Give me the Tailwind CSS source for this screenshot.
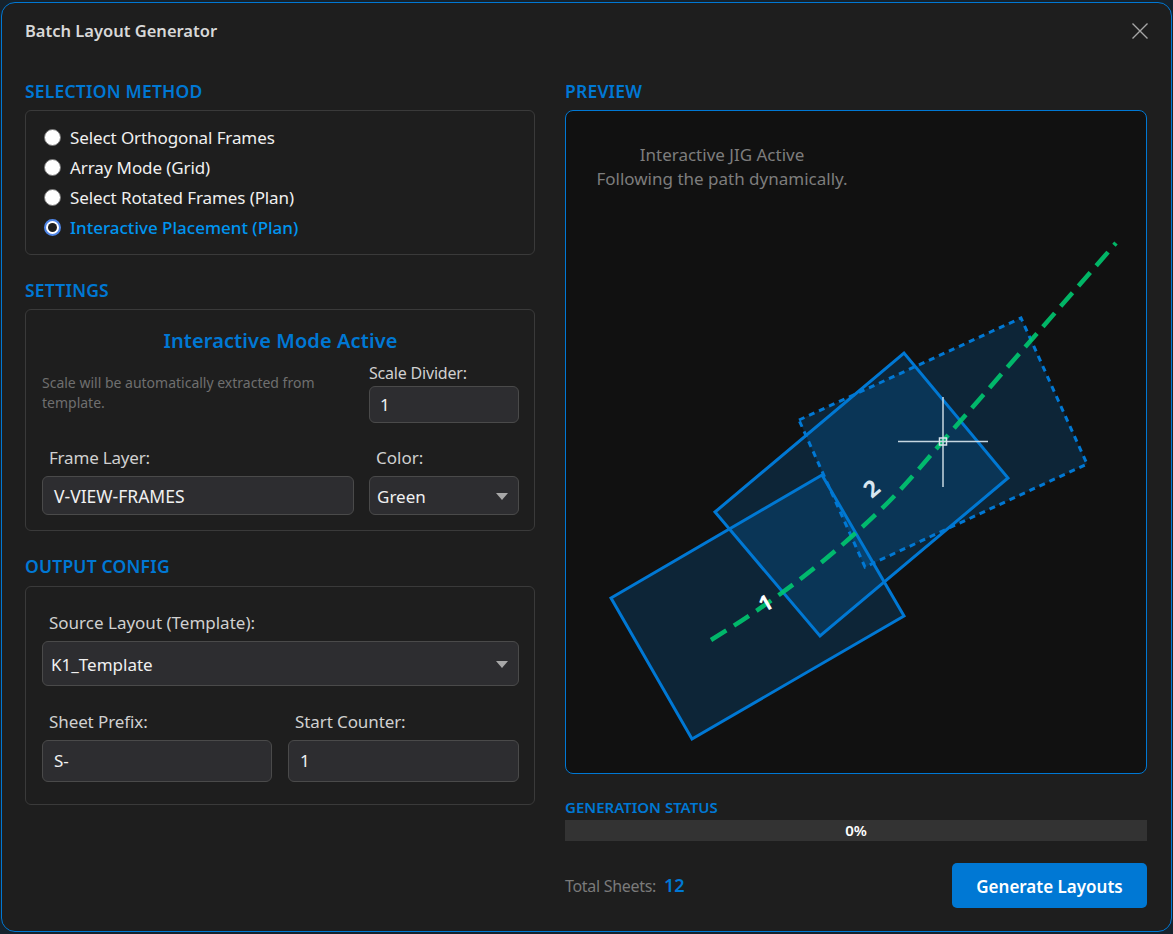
<!DOCTYPE html>
<html lang="en">
<head>
  <meta charset="UTF-8" />
  <title>Batch Layout Generator</title>
  <script src="https://cdn.jsdelivr.net/npm/@tailwindcss/browser@4"></script>
</head>
<body class="bg-[#16222c] font-['Noto_Sans',sans-serif] antialiased">
  <div class="h-[934px] w-[1173px] overflow-hidden p-[1px] pt-[2px]">
    <div class="flex h-[930px] w-[1171px] flex-col rounded-[14px] border border-[#0078d4] bg-[#1e1e1e] pr-[24px] pl-[23px]">
      <!-- Title -->
      <header class="flex h-[56px] shrink-0 items-center justify-between">
        <h1 class="text-[16.5px] font-semibold text-[#d8d8d8]">Batch Layout Generator</h1>
        <svg class="mr-[-2px]" width="18" height="18" viewBox="0 0 18 18" fill="none" stroke="#a6a6a6" stroke-width="1.4"><path d="M1.5 1.5 16.5 16.5M16.5 1.5 1.5 16.5"/></svg>
      </header>

      <div class="flex flex-1 gap-[30px]">
        <!-- Left column -->
        <div class="flex w-[510px] shrink-0 flex-col">
          <h2 class="mt-[20px] h-[31px] text-[17.5px] leading-[24px] font-semibold tracking-[0.2px] text-[#0078d4]">SELECTION METHOD</h2>
          <section class="flex h-[145px] flex-col gap-[9px] rounded-[6px] border border-[#3a3a3a] px-[18px] pt-[16px]">
            <label class="flex h-[21px] items-center gap-[9px] text-[17px] tracking-[-0.1px] text-[#f0f0f0]"><span class="size-[17px] rounded-full border border-[#777] bg-white"></span>Select Orthogonal Frames</label>
            <label class="flex h-[21px] items-center gap-[9px] text-[17px] tracking-[-0.1px] text-[#f0f0f0]"><span class="size-[17px] rounded-full border border-[#777] bg-white"></span>Array Mode (Grid)</label>
            <label class="flex h-[21px] items-center gap-[9px] text-[17px] tracking-[-0.1px] text-[#f0f0f0]"><span class="size-[17px] rounded-full border border-[#777] bg-white"></span>Select Rotated Frames (Plan)</label>
            <label class="flex h-[21px] items-center gap-[9px] text-[17px] font-medium text-[#0095f0]"><span class="flex size-[17px] items-center justify-center rounded-full border-2 border-[#4f86e8] bg-white"><span class="size-[9px] rounded-full bg-[#1e1e1e]"></span></span>Interactive Placement (Plan)</label>
          </section>

          <h2 class="mt-[23px] h-[31px] text-[17.5px] leading-[24px] font-semibold tracking-[0.2px] text-[#0078d4]">SETTINGS</h2>
          <section class="flex h-[222px] flex-col rounded-[6px] border border-[#3a3a3a] pr-[15px] pl-[16px]">
            <p class="mt-[16px] h-[30px] text-center text-[20px] leading-[30px] font-semibold tracking-[0.1px] text-[#0078d4]">Interactive Mode Active</p>
            <div class="mt-[7px] flex gap-[15px]">
              <p class="mt-[10px] w-[312px] text-[14px] leading-[20px] text-[#6f6f6f]">Scale will be automatically extracted from template.</p>
              <div class="w-[150px]">
                <label class="block h-[23px] text-[16px] leading-[20px] tracking-[-0.2px] text-[#d0d0d0]">Scale Divider:</label>
                <div class="flex h-[37px] items-center rounded-[6px] border border-[#4a4a4a] bg-[#2d2d30] px-[10px] text-[17px] text-[#f0f0f0]">1</div>
              </div>
            </div>
            <div class="mt-[25px] flex gap-[15px]">
              <div class="w-[312px]">
                <label class="block h-[28px] pl-[7px] text-[17px] leading-[20px] tracking-[-0.2px] text-[#d0d0d0]">Frame Layer:</label>
                <div class="flex h-[39px] items-center rounded-[6px] border border-[#4a4a4a] bg-[#2d2d30] px-[11px] pt-[2px] text-[17.5px] text-[#f0f0f0]">V-VIEW-FRAMES</div>
              </div>
              <div class="w-[150px]">
                <label class="block h-[28px] pl-[7px] text-[17px] leading-[20px] text-[#d0d0d0]">Color:</label>
                <div class="flex h-[39px] items-center justify-between rounded-[6px] border border-[#4a4a4a] bg-[#2d2d30] pt-[2px] pr-[10px] pl-[7px] text-[17px] text-[#f0f0f0]">Green<svg width="12" height="7" viewBox="0 0 12 7"><path d="M0 0h12L6 7z" fill="#a8a8a8"/></svg></div>
              </div>
            </div>
          </section>

          <h2 class="mt-[23px] h-[32px] text-[17.5px] leading-[24px] font-semibold tracking-[0.2px] text-[#0078d4]">OUTPUT CONFIG</h2>
          <section class="h-[219px] rounded-[6px] border border-[#3a3a3a] pt-[26px] pr-[15px] pl-[16px]">
            <label class="block h-[28px] pl-[7px] text-[17px] leading-[20px] text-[#d0d0d0]">Source Layout (Template):</label>
            <div class="flex h-[45px] items-center justify-between rounded-[6px] border border-[#4a4a4a] bg-[#2d2d30] pt-[2px] pr-[10px] pl-[8px] text-[17px] text-[#f0f0f0]">K1_Template<svg width="12" height="7" viewBox="0 0 12 7"><path d="M0 0h12L6 7z" fill="#a8a8a8"/></svg></div>
            <div class="mt-[26px] flex gap-[16px]">
              <div class="w-[230px]">
                <label class="block h-[28px] pl-[7px] text-[17px] leading-[20px] tracking-[-0.1px] text-[#d0d0d0]">Sheet Prefix:</label>
                <div class="flex h-[42px] items-center rounded-[6px] border border-[#4a4a4a] bg-[#2d2d30] px-[11px] text-[17px] text-[#f0f0f0]">S-</div>
              </div>
              <div class="w-[231px]">
                <label class="block h-[28px] pl-[7px] text-[17px] leading-[20px] tracking-[-0.1px] text-[#d0d0d0]">Start Counter:</label>
                <div class="flex h-[42px] items-center rounded-[6px] border border-[#4a4a4a] bg-[#2d2d30] px-[11px] text-[17px] text-[#f0f0f0]">1</div>
              </div>
            </div>
          </section>
        </div>

        <!-- Right column -->
        <div class="flex w-[582px] shrink-0 flex-col">
          <h2 class="mt-[20px] h-[31px] text-[17.5px] leading-[24px] font-semibold tracking-[0.2px] text-[#0078d4]">PREVIEW</h2>
          <section class="relative h-[664px] rounded-[8px] border border-[#0078d4] bg-[#111111]">
            <p class="absolute top-[32px] left-[0px] w-[312px] text-center text-[17px] leading-[24px] text-[#7d7d7d]">Interactive JIG Active<br/>Following the path dynamically.</p>
            <!-- viewBox uses window coordinates, panel starts at 566,111 -->
            <svg class="absolute top-0 left-0" width="580" height="662" viewBox="566 111 580 662" fill="none">
              <polygon points="611,598 822,475 904,616 692,739" fill="#0078d4" fill-opacity="0.2" stroke="#0078d4" stroke-width="3"/>
              <polygon points="715,512 904,353 1008,478 820,636" fill="#0078d4" fill-opacity="0.2" stroke="#0078d4" stroke-width="3"/>
              <polygon points="799,420 1021,318 1087,464 865,567" fill="#0078d4" fill-opacity="0.2" stroke="#0078d4" stroke-width="3" stroke-dasharray="6 5"/>
              <path d="M711 640C760 610 805 578 850 538S905 485 943 441L1116 243" stroke="#00c870" stroke-opacity="0.9" stroke-width="4.5" stroke-dasharray="18 9"/>
              <text transform="translate(765 602) rotate(-30)" text-anchor="middle" dominant-baseline="central" font-family="Noto Sans" font-size="22" font-weight="700" fill="#ffffff">1</text>
              <text transform="translate(871 488) rotate(-40)" text-anchor="middle" dominant-baseline="central" font-family="Noto Sans" font-size="23" font-weight="700" fill="#d9e6f0">2</text>
              <path d="M898 441.5H988M943 397V487" stroke="#c6d6e0" stroke-width="1.5"/>
              <rect x="939.5" y="438" width="7" height="7" stroke="#d6e4ec" stroke-width="1.5"/>
            </svg>
          </section>

          <h3 class="mt-[24px] h-[22px] text-[15px] leading-[18px] font-semibold text-[#0078d4]">GENERATION STATUS</h3>
          <div class="flex h-[21px] items-center justify-center bg-[#333333] text-[15px] font-semibold text-white">0%</div>
          <div class="mt-[22px] flex items-center justify-between">
            <div class="flex items-center gap-[8px]">
              <span class="text-[16px] tracking-[-0.3px] text-[#7a7a7a]">Total Sheets:</span>
              <span class="text-[18px] font-semibold text-[#0078d4]">12</span>
            </div>
            <button class="h-[45px] w-[195px] rounded-[5px] bg-[#0078d4] pt-[2px] text-[17px] font-semibold text-white">Generate Layouts</button>
          </div>
        </div>
      </div>
    </div>
  </div>
</body>
</html>
